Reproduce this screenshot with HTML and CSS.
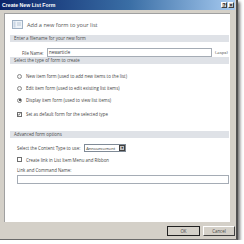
FILE: index.html
```html
<!DOCTYPE html>
<html lang="en">
<head>
    <meta charset="UTF-8">
    <title>Create New List Form</title>
    <link rel="stylesheet" href="styles.css">
</head>
<body>

    <div class="window">
        <!-- Title bar -->
        <div class="titlebar">
            <span class="title">Create New List Form</span>
            <span class="tbtn">?</span>
            <span class="tbtn close">×</span>
        </div>

        <div class="panel">
            <div class="header">
                <svg class="form-icon" width="11" height="9" viewBox="0 0 11 9">
                    <rect x="0.5" y="0.5" width="10" height="8" fill="#eef3f8" stroke="#9fb1c4"/>
                    <rect x="1.5" y="1.5" width="2" height="6" fill="#c9d6e3"/>
                    <line x1="5" y1="3" x2="9" y2="3" stroke="#b9c7d6"/>
                    <line x1="5" y1="5" x2="9" y2="5" stroke="#b9c7d6"/>
                </svg>
                <span>Add a new form to your list</span>
            </div>

            <div class="bar">Enter a filename for your new form</div>
            <div class="file-row">
                <span class="file-label">File Name:</span>
                <div class="textbox file-box">newarticle</div>
                <span class="ext">(.aspx)</span>
            </div>

            <div class="bar">Select the type of form to create</div>
            <div class="options">
                <div class="opt"><span class="radio"></span>New item form (used to add new items to the list)</div>
                <div class="opt"><span class="radio"></span>Edit item form (used to edit existing list items)</div>
                <div class="opt"><span class="radio on"></span>Display item form (used to view list items)</div>
                <div class="opt default-opt"><span class="check on">
                    <svg width="5" height="5" viewBox="0 0 5 5"><path d="M1 2.4 L2 3.5 L4 1" fill="none" stroke="#222" stroke-width="0.9"/></svg>
                </span>Set as default form for the selected type</div>
            </div>

            <div class="bar adv-bar">Advanced form options</div>
            <div class="advanced">
                <div class="select-row">
                    <span>Select the Content Type to use:</span>
                    <span class="select"><span class="select-text">Announcement</span><span class="arrow">▼</span></span>
                </div>
                <div class="opt link-opt"><span class="check"></span>Create link in List Item Menu and Ribbon</div>
                <div class="field-label">Link and Command Name:</div>
                <div class="textbox wide-box"></div>
            </div>
        </div>

        <!-- Buttons -->
        <div class="footer">
            <button class="btn default">OK</button>
            <button class="btn">Cancel</button>
        </div>
    </div>

</body>
</html>
```

FILE: styles.css
```css
* {
    margin: 0;
    padding: 0;
    box-sizing: border-box;
}

body {
    font-family: 'Open Sans', sans-serif;
    background-color: #ffffff;
    color: #444;
}

/* Window frame */
.window {
    width: 238px;
    height: 240px;
    background-color: #d4d0c8;
    border-right: 2px solid #505050;
    border-bottom: 1px solid #6a6a6a;
    box-shadow: 2px 2px 3px rgba(0, 0, 0, 0.55);
}

.titlebar {
    height: 10px;
    margin-right: 1px;
    display: flex;
    align-items: center;
    padding: 0 1px 0 2px;
    background: linear-gradient(to right, #0a246a, #3a6ea5 55%, #a6caf0);
}

.title {
    flex: 1;
    color: #fff;
    font-family: 'Liberation Sans', sans-serif;
    font-weight: bold;
    font-size: 5.2px;
}

.tbtn {
    width: 6px;
    height: 6px;
    background-color: #d4d0c8;
    border: 1px solid;
    border-color: #fff #404040 #404040 #fff;
    font-family: 'Liberation Sans', sans-serif;
    font-weight: bold;
    font-size: 5px;
    line-height: 4px;
    text-align: center;
    color: #000;
}

.tbtn.close {
    margin-left: 1px;
}

/* White content panel */
.panel {
    margin: 3px 0 0 4px;
    width: 226px;
    height: 209px;
    background-color: #fff;
    border-top: 1px solid #a0a0a0;
    border-left: 1px solid #a0a0a0;
}

.header {
    height: 21px;
    display: flex;
    align-items: center;
    gap: 4px;
    padding-left: 7px;
    font-size: 5.6px;
    color: #555;
}

.bar {
    margin: 0 1px 0 5px;
    height: 7px;
    line-height: 7px;
    padding-left: 4px;
    background-color: #dfe2e7;
    font-size: 4.4px;
    color: #4a4a4a;
}

.file-row {
    margin-top: 6px;
    height: 9px;
    display: flex;
    align-items: center;
    padding-left: 17px;
    font-size: 4.4px;
    white-space: nowrap;
}

.file-label {
    width: 25px;
}

.textbox {
    height: 9px;
    background-color: #fff;
    border: 1px solid #a5acb5;
}

.file-box {
    width: 165px;
    padding-left: 1px;
    line-height: 7px;
    font-size: 4.4px;
    color: #333;
}

.ext {
    margin-left: 3px;
    font-size: 4.2px;
}

.options {
    padding: 6px 0 0 12px;
}

.opt {
    height: 12px;
    display: flex;
    align-items: center;
    gap: 4px;
    font-size: 4.4px;
}

.default-opt {
    margin-top: 2px;
}

.radio {
    width: 5px;
    height: 5px;
    border-radius: 50%;
    border: 1px solid #8a8a8a;
    background-color: #f4f4f4;
    position: relative;
}

.radio.on::after {
    content: "";
    position: absolute;
    left: 0.5px;
    top: 0.5px;
    width: 2px;
    height: 2px;
    border-radius: 50%;
    background-color: #222;
}

.check {
    width: 5px;
    height: 5px;
    border: 1px solid #707070;
    background-color: #fff;
    display: flex;
}

.check svg {
    margin: -1px 0 0 -1px;
}

.adv-bar {
    margin-top: 11px;
}

.advanced {
    padding: 5px 0 0 12px;
    font-size: 4.4px;
}

.select-row {
    height: 10px;
    display: flex;
    align-items: center;
    gap: 4px;
}

.select {
    width: 42px;
    height: 8px;
    display: flex;
    align-items: center;
    padding-left: 1px;
    border: 1px solid #7f8a96;
    color: #333;
    white-space: nowrap;
}

.select-text {
    font-size: 4.1px;
    letter-spacing: -0.05px;
}

.arrow {
    margin-left: auto;
    flex-shrink: 0;
    width: 6px;
    height: 6px;
    background-color: #c0c0c0;
    border: 1px solid #404040;
    font-size: 3px;
    line-height: 4px;
    text-align: center;
    color: #000;
}

.link-opt {
    height: 11px;
    margin-top: 1px;
}

.field-label {
    height: 10px;
    line-height: 10px;
}

.wide-box {
    width: 212px;
}

/* Buttons */
.footer {
    display: flex;
    justify-content: flex-end;
    gap: 3px;
    padding-right: 1px;
    margin-top: 4px;
}

.btn {
    width: 32px;
    height: 10px;
    background-color: #d4d0c8;
    border: 1px solid;
    border-color: #fff #404040 #404040 #fff;
    font-family: 'Open Sans', sans-serif;
    font-size: 4.4px;
    color: #444;
}

.btn.default {
    width: 33px;
    outline: 1px solid #202020;
    outline-offset: -1px;
}
```
